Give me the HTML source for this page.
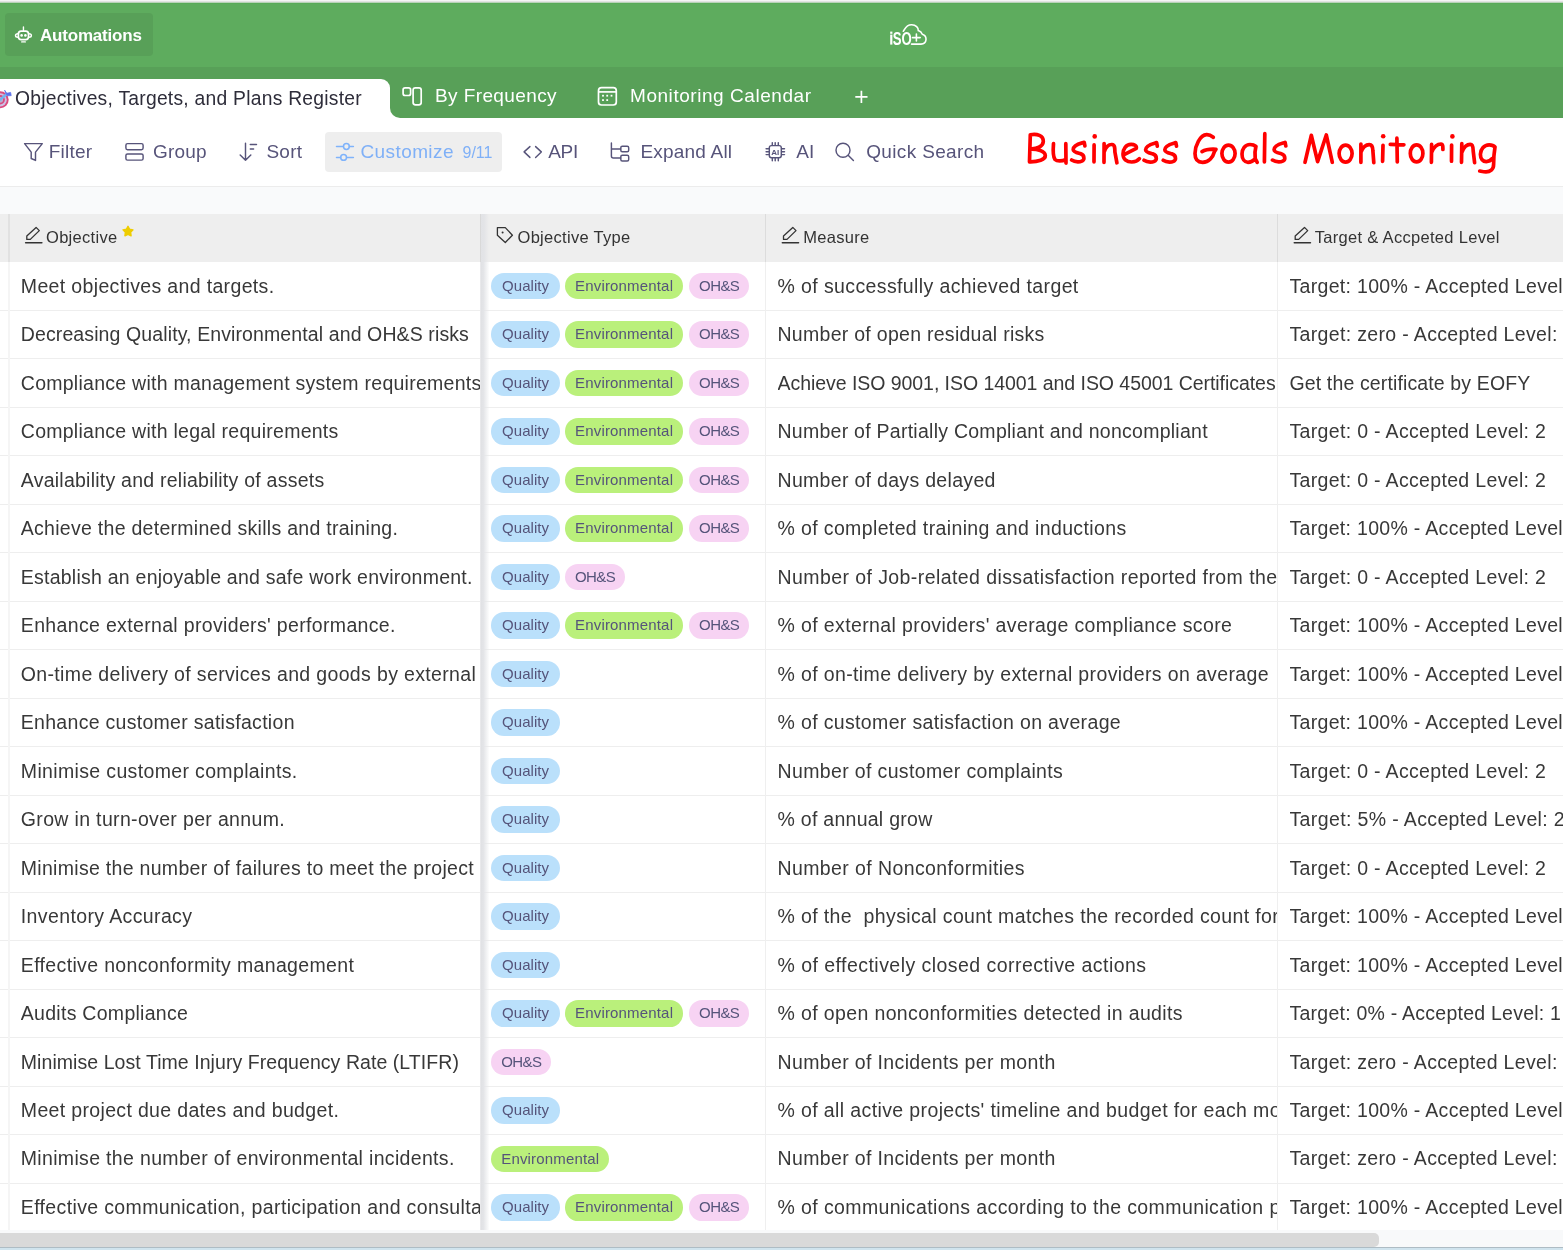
<!DOCTYPE html>
<html><head><meta charset="utf-8"><title>Objectives, Targets, and Plans Register</title>
<style>
*{box-sizing:border-box}
html,body{margin:0;padding:0}
body{width:1563px;height:1250px;overflow:hidden;position:relative;background:#fff;font-family:"Liberation Sans",sans-serif;color:#333}
.a{position:absolute}
#root{position:absolute;left:0;top:0;width:1563px;height:1250px;overflow:hidden;background:#fff;will-change:transform}
.t{position:absolute;white-space:pre;line-height:20px;height:20px}
.cell{position:absolute;overflow:hidden;white-space:pre;height:30px;line-height:30px;font-size:19.5px;letter-spacing:0.25px;color:#383838}
.pill{position:absolute;height:26.4px;line-height:26.4px;border-radius:13.2px;font-size:15px;letter-spacing:0.05px;color:#55547a;text-align:center;white-space:pre}
.q{background:#bae0fb}
.e{background:#baf07b}
.o{background:#f7d3f3}
.tb{color:#57547a;font-size:19px;letter-spacing:0.2px}
.hd{font-size:16.5px;letter-spacing:0.3px;color:#333}
svg{position:absolute;overflow:visible}
</style></head><body><div id="root">

<div class="a" style="left:0;top:0;width:1563px;height:1px;background:#f5f5f5"></div>
<div class="a" style="left:0;top:1px;width:1563px;height:1px;background:#e3e3e3"></div>
<div class="a" style="left:0;top:2px;width:1563px;height:1px;background:#b9d3b9"></div>
<div class="a" style="left:0;top:3px;width:1563px;height:64px;background:#5eac5e"></div>
<div class="a" style="left:0;top:3px;width:1563px;height:1px;background:#59aa59"></div>
<div class="a" style="left:5px;top:13px;width:147.5px;height:43px;background:#58a058;border-radius:4px"></div>
<svg style="left:0;top:0" width="40" height="50" viewBox="0 0 40 50"><g fill="none" stroke="#fff" stroke-width="1.4" stroke-linecap="round" stroke-linejoin="round">
<line x1="23.45" y1="26.9" x2="23.45" y2="30.4"/>
<rect x="18.4" y="31.2" width="10.1" height="8.4" rx="2.8" stroke-width="1.7"/>
<path d="M18 33.7 C16.2 33.7 15.5 34.5 15.5 35.5 C15.5 36.5 16.2 37.3 18 37.3 M28.9 33.7 C30.7 33.7 31.4 34.5 31.4 35.5 C31.4 36.5 30.7 37.3 28.9 37.3"/>
<line x1="21.7" y1="41.9" x2="25.3" y2="41.9"/>
</g><circle cx="21.6" cy="35.4" r="1.3" fill="#fff"/><circle cx="25.4" cy="35.4" r="1.3" fill="#fff"/></svg>
<div class="t" style="left:40px;top:25.71px;font-size:17px;font-weight:bold;color:#fff;letter-spacing:-0.2px">Automations</div>
<svg style="left:0;top:0" width="1563" height="60" viewBox="0 0 1563 60">
<g fill="#fff"><rect x="890.2" y="31.6" width="2.2" height="2.2"/><rect x="890.2" y="34.6" width="2.2" height="10"/></g>
<text x="892.8" y="44.7" font-family="Liberation Sans" font-weight="bold" font-size="17.6" fill="#fff" textLength="19" lengthAdjust="spacingAndGlyphs">SO</text>
<g fill="none" stroke="#fff" stroke-width="1.6" stroke-linecap="round">
<path d="M903.3 31.2 C905 29.5 905.5 25 911.5 24.8 C916 24.7 918.5 28 918.3 30.6 C920.5 31.4 921.7 32.8 922.3 34.2 C925 35 926.2 37.5 926 39.8 C925.7 42.8 923.6 44 921 44.1 L911.5 44.1"/>
<path d="M912.5 37.6 H920.2 M916.4 34 V41"/>
</g></svg>
<div class="a" style="left:0;top:67px;width:390px;height:51px;background:#58a058"></div>
<div class="a" style="left:0;top:79px;width:390px;height:39px;background:#fff;border-top-right-radius:9px"></div>
<div class="a" style="left:390px;top:67px;width:1173px;height:51px;background:#58a058;border-bottom-left-radius:10px"></div>
<svg style="left:0;top:0" width="20" height="120" viewBox="0 0 20 120">
<circle cx="0.2" cy="99.8" r="8.5" fill="#da4a7e"/><circle cx="0.2" cy="99.8" r="6.6" fill="#ccc0e4"/><circle cx="0.2" cy="99.8" r="4.7" fill="#da4a7e"/><circle cx="0.2" cy="99.8" r="2.9" fill="#b9aed0"/>
<path d="M0.3 99.6 L6.8 94" stroke="#72b2f0" stroke-width="2.4" stroke-linecap="round"/>
<path d="M4.6 90.2 L6.8 93.3 L10.6 92.4 L11.2 95.6 L7.6 95.8 L6.4 94.6 Z" fill="#5c72ea" stroke="#5c72ea" stroke-width="0.8" stroke-linejoin="round"/>
</svg>
<div class="t" style="left:15px;top:88.71px;font-size:19.3px;color:#2e2d3a;letter-spacing:0.25px">Objectives, Targets, and Plans Register</div>
<svg style="left:0;top:0" width="900" height="120" viewBox="0 0 900 120"><g fill="none" stroke="#fff" stroke-width="1.7">
<rect x="403.1" y="87.8" width="7.5" height="7.7" rx="2"/>
<rect x="413.1" y="87.8" width="8.1" height="17.1" rx="2.3"/>
<rect x="598.5" y="87.7" width="17.8" height="17.3" rx="3"/>
<line x1="598.5" y1="91.9" x2="616.3" y2="91.9"/>
<path d="M861.4 90.8 V103 M855.3 96.9 H867.5"/>
</g><g fill="#fff">
<rect x="602.1" y="94.8" width="1.8" height="1.8"/><rect x="606.3" y="94.8" width="1.8" height="1.8"/><rect x="610.6" y="94.8" width="1.8" height="1.8"/>
<rect x="602.1" y="99.2" width="1.8" height="1.8"/><rect x="606.3" y="99.2" width="1.8" height="1.8"/>
</g></svg>
<div class="t" style="left:435px;top:85.82px;font-size:19px;color:#fff;letter-spacing:0.4px">By Frequency</div>
<div class="t" style="left:630px;top:86.02px;font-size:19px;color:#fff;letter-spacing:0.55px">Monitoring Calendar</div>
<div class="a" style="left:0;top:186px;width:1563px;height:1px;background:#ececec"></div>
<div class="a" style="left:0;top:187px;width:1563px;height:27px;background:#f9fafb"></div>
<div class="a" style="left:325px;top:132px;width:177px;height:40px;background:#eeeeee;border-radius:4px"></div>
<svg style="left:0;top:0" width="1000" height="180" viewBox="0 0 1000 180"><g fill="none" stroke="#57547a" stroke-width="1.45" stroke-linecap="round" stroke-linejoin="round">
<path d="M24.6 143.6 H42.3 L35.5 152.1 V160.4 L31.2 158.5 V152.1 Z"/>
<rect x="125.9" y="143.6" width="17.2" height="6.1" rx="1.6"/>
<rect x="125.9" y="154" width="17.2" height="6.1" rx="1.6"/>
<path d="M245.5 143.3 V160.2 M240.2 155 L245.5 160.3 L250.8 155 M250.3 144.4 H256.5 M250.3 149 H253.6"/>
<path d="M529.9 146.6 L524.1 151.9 L529.9 157.4 M535.6 146.6 L541.3 151.9 L535.6 157.4"/>
<path d="M611.4 143 V156 Q611.4 157.9 613.3 157.9 H620.6 M611.4 149 H620.6"/>
<rect x="620.8" y="146.2" width="7.9" height="5.6" rx="1.5"/>
<rect x="620.8" y="155.3" width="7.9" height="5.6" rx="1.5"/>
<rect x="769.3" y="145.6" width="12" height="12.2" rx="2.2"/>
<path d="M772.3 142.6 V145 M775.2 142.6 V145 M778.3 142.6 V145 M772.3 158.4 V160.8 M775.2 158.4 V160.8 M778.3 158.4 V160.8 M766.1 148.8 H768.6 M766.1 151.7 H768.6 M766.1 154.6 H768.6 M782 148.8 H784.5 M782 151.7 H784.5 M782 154.6 H784.5"/>
<circle cx="843" cy="150.3" r="7"/>
<path d="M848.4 155.6 L853.4 160.6"/>
</g>
<text x="771.2" y="155.2" font-family="Liberation Sans" font-weight="bold" font-size="8" fill="#57547a">AI</text>
<g fill="none" stroke="#7fb3fb" stroke-width="1.5" stroke-linecap="round">
<path d="M336.5 146.5 H343.4 M349.4 146.5 H353.4 M336.5 157.4 H340.6 M346.6 157.4 H353.4"/>
<circle cx="346.4" cy="146.5" r="2.9"/><circle cx="343.6" cy="157.4" r="2.9"/>
</g></svg>
<div class="t tb" style="left:48.8px;top:141.62px;font-size:19px;">Filter</div>
<div class="t tb" style="left:153px;top:141.62px;font-size:19px;">Group</div>
<div class="t tb" style="left:266.5px;top:141.62px;font-size:19px;">Sort</div>
<div class="t tb" style="left:360.5px;top:141.62px;font-size:19px;color:#7fb0f7;letter-spacing:0.4px">Customize</div>
<div class="t tb" style="left:462.5px;top:142.66px;font-size:16px;color:#7fb0f7;letter-spacing:0px">9/11</div>
<div class="t tb" style="left:548.2px;top:141.62px;font-size:19px;letter-spacing:-0.3px">API</div>
<div class="t tb" style="left:640.5px;top:141.62px;font-size:19px;">Expand All</div>
<div class="t tb" style="left:796.2px;top:141.62px;font-size:19px;">AI</div>
<div class="t tb" style="left:866.2px;top:141.62px;font-size:19px;letter-spacing:0.35px">Quick Search</div>
<svg style="left:0;top:0" width="1563" height="190" viewBox="0 0 1563 190">
<defs><path id="gs" d="M0 0 L-0.7 -3.6 C-4 -2.5 -11.5 -1.5 -11.7 3.6 C-11.8 6 -8 6.8 -4.5 7.7 C-1.5 8.5 -1 10 -1 12.3 C-1 15 -4.5 15.9 -7 15.9 C-9.5 15.9 -12 15 -13.3 14.1"/></defs>
<g fill="none" stroke="#ff0000" stroke-width="3.7" stroke-linecap="round" stroke-linejoin="round">
<path d="M1030.3 134.8 L1029.5 161.8 M1030.3 134.8 C1037 133.5 1043.5 135.5 1043.3 141.5 C1043 147 1036 149 1031 148.8 M1030.5 149.3 C1037 149 1045 151 1045.3 155.5 C1045.5 159.5 1038 162 1029.5 161.8"/>
<path d="M1053.5 143.7 C1053 150 1053 157 1055 159.5 C1057 161.5 1062 161.3 1065.5 159.8 M1065.8 143.7 L1066 163.1"/>
<use href="#gs" x="1084.9" y="145.9"/>
<path d="M1094.1 144.9 L1094 161.8"/>
<path d="M1104.1 143.5 L1104 162.3 M1104.3 151.5 C1106 147 1109 144.3 1112 144.5 C1115 144.7 1114.8 148 1114.9 152 L1116.9 162.8"/>
<path d="M1124.6 154.3 L1136.3 148.3 C1137 145.5 1134 144.3 1131 144.4 C1126 144.5 1123 149 1123 154 C1123 159.5 1127 162 1131.7 162 C1135 162 1138 160.5 1139.4 158.7"/>
<use href="#gs" x="1157.3" y="146.2"/>
<use href="#gs" x="1176.5" y="146.2"/>
<path d="M1213.3 137.3 C1211 135.5 1209 134.6 1206.6 134.7 C1200 135 1195 146 1195 153.5 C1195 159.5 1198 162.3 1202.6 162.3 C1209 162.3 1213 157 1214.5 151.5 L1216 149.3 C1211 149 1205.5 149.5 1202 151.6"/>
<ellipse cx="1228.5" cy="153.6" rx="6.6" ry="8.5"/>
<path d="M1255.9 146.5 C1254 144.8 1252 144.5 1250 144.5 C1245 144.5 1242 149 1242 154 C1242 159 1244.5 162.3 1248 162.3 C1251 162.3 1253 161 1254.3 159.5 M1255.9 146.5 C1254.8 150.5 1254.8 155 1255.2 158.5 L1257.2 162.3"/>
<path d="M1264.8 133.7 L1264.4 161.9"/>
<use href="#gs" x="1285.8" y="146"/>
<path d="M1305 162.3 L1311.3 135.3 L1317.6 161.6 L1326.3 135 L1332.3 162.3"/>
<ellipse cx="1345.6" cy="153.6" rx="6.5" ry="8.5"/>
<path d="M1360.9 144 L1360.9 162.3 M1361 152 C1363 147 1366 144.6 1369.2 144.6 C1372.5 144.6 1372.9 148 1372.9 151 L1373.8 162.6"/>
<path d="M1383 145.3 L1382.6 161.3"/>
<path d="M1396.9 138.2 L1397.3 161.9 M1390.3 144.4 L1403.9 144.8"/>
<ellipse cx="1416.6" cy="153.4" rx="6.3" ry="8.5"/>
<path d="M1431.6 144.4 L1431.4 162.3 M1431.8 152 C1434 147 1437.5 144 1441 144 C1443 144 1442.9 147 1442.9 149.5"/>
<path d="M1451.6 145.1 L1451.5 161.2"/>
<path d="M1461.8 143.7 L1461.5 162.3 M1462 152 C1464 147 1467 144.4 1470.2 144.4 C1473 144.4 1473.2 148 1473.2 151 L1474.6 162.6"/>
<path d="M1495 147 C1493.5 145.3 1491.5 144.8 1489.2 144.8 C1484 144.8 1480.4 149.5 1480.4 154.3 C1480.4 159 1483 161.6 1486.3 161.6 C1489 161.6 1491 160.3 1492.1 158.6 M1495 147 C1494 153 1493.6 158 1493.6 164.5 C1493.6 169.5 1490 171.8 1486 171.8 C1483.5 171.8 1481.5 171.3 1479.7 171"/>
</g><g fill="#ff0000"><circle cx="1094.7" cy="136.4" r="2.3"/><circle cx="1383.2" cy="136.3" r="2.3"/><circle cx="1452.4" cy="136.4" r="2.3"/></g>
</svg>
<div class="a" style="left:0;top:214px;width:1563px;height:48px;background:#eeeeee"></div>
<div class="a" style="left:8px;top:214px;width:2px;height:48px;background:#e1e1e1"></div>
<div class="a" style="left:765px;top:214px;width:1px;height:48px;background:#dcdcdc"></div>
<div class="a" style="left:1277px;top:214px;width:1px;height:48px;background:#dcdcdc"></div>
<svg style="left:0;top:0" width="1563" height="262" viewBox="0 0 1563 262"><g fill="none" stroke="#333" stroke-width="1.3" stroke-linejoin="round" stroke-linecap="round">
<path d="M36.1 227.4 L39.3 230.6 L30.3 239.4 H26.8 V235.9 Z"/><path d="M25.6 242.7 H41.9" stroke-width="1.4"/>
<path d="M792.8 227.4 L796 230.6 L787 239.4 H783.5 V235.9 Z"/><path d="M782.3 242.7 H798.6" stroke-width="1.4"/>
<path d="M1304.5 227.4 L1307.7 230.6 L1298.7 239.4 H1295.2 V235.9 Z"/><path d="M1294.2 242.7 H1310.5" stroke-width="1.4"/>
<path d="M497.4 227.6 H505.3 L512.4 235.2 L505.3 242.5 L497.4 235.2 Z"/>
</g><circle cx="502.6" cy="232.6" r="1" fill="#333"/>
<path d="M128.00 226.25 L129.62 229.28 L132.99 229.88 L130.62 232.35 L131.09 235.75 L128.00 234.25 L124.91 235.75 L125.38 232.35 L123.01 229.88 L126.38 229.28 Z" fill="#eecd00" stroke="#eecd00" stroke-width="1.4" stroke-linejoin="round"/>
</svg>
<div class="t hd" style="left:46px;top:226.78px;font-size:16.5px;">Objective</div>
<div class="t hd" style="left:517.5px;top:226.78px;font-size:16.5px;">Objective Type</div>
<div class="t hd" style="left:803.2px;top:226.78px;font-size:16.5px;">Measure</div>
<div class="t hd" style="left:1314.8px;top:226.78px;font-size:16.5px;">Target &amp; Accpeted Level</div>
<div class="a" style="left:0;top:310px;width:1563px;height:1px;background:#eeeeee"></div>
<div class="cell" style="left:20.8px;top:270.74px;width:459.2px;letter-spacing:0.35px">Meet objectives and targets.</div>
<div class="cell" style="left:777.5px;top:270.74px;width:499px;letter-spacing:0.39px">% of successfully achieved target</div>
<div class="cell" style="left:1289.5px;top:270.74px;width:274px;letter-spacing:0.31px">Target: 100% - Accepted Level: 80%</div>
<div class="pill q" style="left:491.2px;top:272.9px;width:68.8px">Quality</div>
<div class="pill e" style="left:565px;top:272.9px;width:118.2px;letter-spacing:0.17px">Environmental</div>
<div class="pill o" style="left:689.1px;top:272.9px;width:60.1px;letter-spacing:-0.6px">OH&amp;S</div>
<div class="a" style="left:0;top:358px;width:1563px;height:1px;background:#eeeeee"></div>
<div class="cell" style="left:20.8px;top:319.23px;width:459.2px;letter-spacing:0.11px">Decreasing Quality, Environmental and OH&amp;S risks</div>
<div class="cell" style="left:777.5px;top:319.23px;width:499px;letter-spacing:0.28px">Number of open residual risks</div>
<div class="cell" style="left:1289.5px;top:319.23px;width:274px;letter-spacing:0.34px">Target: zero - Accepted Level: 1</div>
<div class="pill q" style="left:491.2px;top:321.38px;width:68.8px">Quality</div>
<div class="pill e" style="left:565px;top:321.38px;width:118.2px;letter-spacing:0.17px">Environmental</div>
<div class="pill o" style="left:689.1px;top:321.38px;width:60.1px;letter-spacing:-0.6px">OH&amp;S</div>
<div class="a" style="left:0;top:407px;width:1563px;height:1px;background:#eeeeee"></div>
<div class="cell" style="left:20.8px;top:367.71px;width:459.2px;letter-spacing:0.26px">Compliance with management system requirements</div>
<div class="cell" style="left:777.5px;top:367.71px;width:499px;letter-spacing:-0.05px">Achieve ISO 9001, ISO 14001 and ISO 45001 Certificates</div>
<div class="cell" style="left:1289.5px;top:367.71px;width:274px;letter-spacing:0.13px">Get the certificate by EOFY</div>
<div class="pill q" style="left:491.2px;top:369.87px;width:68.8px">Quality</div>
<div class="pill e" style="left:565px;top:369.87px;width:118.2px;letter-spacing:0.17px">Environmental</div>
<div class="pill o" style="left:689.1px;top:369.87px;width:60.1px;letter-spacing:-0.6px">OH&amp;S</div>
<div class="a" style="left:0;top:455px;width:1563px;height:1px;background:#eeeeee"></div>
<div class="cell" style="left:20.8px;top:416.2px;width:459.2px;letter-spacing:0.26px">Compliance with legal requirements</div>
<div class="cell" style="left:777.5px;top:416.2px;width:499px;letter-spacing:0.26px">Number of Partially Compliant and noncompliant</div>
<div class="cell" style="left:1289.5px;top:416.2px;width:274px;letter-spacing:0.33px">Target: 0 - Accepted Level: 2</div>
<div class="pill q" style="left:491.2px;top:418.35px;width:68.8px">Quality</div>
<div class="pill e" style="left:565px;top:418.35px;width:118.2px;letter-spacing:0.17px">Environmental</div>
<div class="pill o" style="left:689.1px;top:418.35px;width:60.1px;letter-spacing:-0.6px">OH&amp;S</div>
<div class="a" style="left:0;top:504px;width:1563px;height:1px;background:#eeeeee"></div>
<div class="cell" style="left:20.8px;top:464.68px;width:459.2px;letter-spacing:0.24px">Availability and reliability of assets</div>
<div class="cell" style="left:777.5px;top:464.68px;width:499px;letter-spacing:0.31px">Number of days delayed</div>
<div class="cell" style="left:1289.5px;top:464.68px;width:274px;letter-spacing:0.33px">Target: 0 - Accepted Level: 2</div>
<div class="pill q" style="left:491.2px;top:466.84px;width:68.8px">Quality</div>
<div class="pill e" style="left:565px;top:466.84px;width:118.2px;letter-spacing:0.17px">Environmental</div>
<div class="pill o" style="left:689.1px;top:466.84px;width:60.1px;letter-spacing:-0.6px">OH&amp;S</div>
<div class="a" style="left:0;top:552px;width:1563px;height:1px;background:#eeeeee"></div>
<div class="cell" style="left:20.8px;top:513.17px;width:459.2px;letter-spacing:0.28px">Achieve the determined skills and training.</div>
<div class="cell" style="left:777.5px;top:513.17px;width:499px;letter-spacing:0.37px">% of completed training and inductions</div>
<div class="cell" style="left:1289.5px;top:513.17px;width:274px;letter-spacing:0.31px">Target: 100% - Accepted Level: 80%</div>
<div class="pill q" style="left:491.2px;top:515.33px;width:68.8px">Quality</div>
<div class="pill e" style="left:565px;top:515.33px;width:118.2px;letter-spacing:0.17px">Environmental</div>
<div class="pill o" style="left:689.1px;top:515.33px;width:60.1px;letter-spacing:-0.6px">OH&amp;S</div>
<div class="a" style="left:0;top:601px;width:1563px;height:1px;background:#eeeeee"></div>
<div class="cell" style="left:20.8px;top:561.65px;width:459.2px;letter-spacing:0.24px">Establish an enjoyable and safe work environment.</div>
<div class="cell" style="left:777.5px;top:561.65px;width:499px;letter-spacing:0.42px">Number of Job-related dissatisfaction reported from the staff</div>
<div class="cell" style="left:1289.5px;top:561.65px;width:274px;letter-spacing:0.33px">Target: 0 - Accepted Level: 2</div>
<div class="pill q" style="left:491.2px;top:563.81px;width:68.8px">Quality</div>
<div class="pill o" style="left:565px;top:563.81px;width:60.1px;letter-spacing:-0.6px">OH&amp;S</div>
<div class="a" style="left:0;top:649px;width:1563px;height:1px;background:#eeeeee"></div>
<div class="cell" style="left:20.8px;top:610.14px;width:459.2px;letter-spacing:0.34px">Enhance external providers' performance.</div>
<div class="cell" style="left:777.5px;top:610.14px;width:499px;letter-spacing:0.38px">% of external providers' average compliance score</div>
<div class="cell" style="left:1289.5px;top:610.14px;width:274px;letter-spacing:0.31px">Target: 100% - Accepted Level: 80%</div>
<div class="pill q" style="left:491.2px;top:612.29px;width:68.8px">Quality</div>
<div class="pill e" style="left:565px;top:612.29px;width:118.2px;letter-spacing:0.17px">Environmental</div>
<div class="pill o" style="left:689.1px;top:612.29px;width:60.1px;letter-spacing:-0.6px">OH&amp;S</div>
<div class="a" style="left:0;top:698px;width:1563px;height:1px;background:#eeeeee"></div>
<div class="cell" style="left:20.8px;top:658.62px;width:459.2px;letter-spacing:0.35px">On-time delivery of services and goods by external providers</div>
<div class="cell" style="left:777.5px;top:658.62px;width:499px;letter-spacing:0.37px">% of on-time delivery by external providers on average</div>
<div class="cell" style="left:1289.5px;top:658.62px;width:274px;letter-spacing:0.31px">Target: 100% - Accepted Level: 80%</div>
<div class="pill q" style="left:491.2px;top:660.78px;width:68.8px">Quality</div>
<div class="a" style="left:0;top:746px;width:1563px;height:1px;background:#eeeeee"></div>
<div class="cell" style="left:20.8px;top:707.11px;width:459.2px;letter-spacing:0.29px">Enhance customer satisfaction</div>
<div class="cell" style="left:777.5px;top:707.11px;width:499px;letter-spacing:0.35px">% of customer satisfaction on average</div>
<div class="cell" style="left:1289.5px;top:707.11px;width:274px;letter-spacing:0.31px">Target: 100% - Accepted Level: 80%</div>
<div class="pill q" style="left:491.2px;top:709.26px;width:68.8px">Quality</div>
<div class="a" style="left:0;top:795px;width:1563px;height:1px;background:#eeeeee"></div>
<div class="cell" style="left:20.8px;top:755.59px;width:459.2px;letter-spacing:0.35px">Minimise customer complaints.</div>
<div class="cell" style="left:777.5px;top:755.59px;width:499px;letter-spacing:0.36px">Number of customer complaints</div>
<div class="cell" style="left:1289.5px;top:755.59px;width:274px;letter-spacing:0.33px">Target: 0 - Accepted Level: 2</div>
<div class="pill q" style="left:491.2px;top:757.75px;width:68.8px">Quality</div>
<div class="a" style="left:0;top:843px;width:1563px;height:1px;background:#eeeeee"></div>
<div class="cell" style="left:20.8px;top:804.08px;width:459.2px;letter-spacing:0.34px">Grow in turn-over per annum.</div>
<div class="cell" style="left:777.5px;top:804.08px;width:499px;letter-spacing:0.27px">% of annual grow</div>
<div class="cell" style="left:1289.5px;top:804.08px;width:274px;letter-spacing:0.37px">Target: 5% - Accepted Level: 2%</div>
<div class="pill q" style="left:491.2px;top:806.24px;width:68.8px">Quality</div>
<div class="a" style="left:0;top:892px;width:1563px;height:1px;background:#eeeeee"></div>
<div class="cell" style="left:20.8px;top:852.56px;width:459.2px;letter-spacing:0.3px">Minimise the number of failures to meet the project requirements</div>
<div class="cell" style="left:777.5px;top:852.56px;width:499px;letter-spacing:0.4px">Number of Nonconformities</div>
<div class="cell" style="left:1289.5px;top:852.56px;width:274px;letter-spacing:0.33px">Target: 0 - Accepted Level: 2</div>
<div class="pill q" style="left:491.2px;top:854.72px;width:68.8px">Quality</div>
<div class="a" style="left:0;top:940px;width:1563px;height:1px;background:#eeeeee"></div>
<div class="cell" style="left:20.8px;top:901.05px;width:459.2px;letter-spacing:0.38px">Inventory Accuracy</div>
<div class="cell" style="left:777.5px;top:901.05px;width:499px;letter-spacing:0.37px">% of the  physical count matches the recorded count for</div>
<div class="cell" style="left:1289.5px;top:901.05px;width:274px;letter-spacing:0.31px">Target: 100% - Accepted Level: 95%</div>
<div class="pill q" style="left:491.2px;top:903.2px;width:68.8px">Quality</div>
<div class="a" style="left:0;top:989px;width:1563px;height:1px;background:#eeeeee"></div>
<div class="cell" style="left:20.8px;top:949.53px;width:459.2px;letter-spacing:0.35px">Effective nonconformity management</div>
<div class="cell" style="left:777.5px;top:949.53px;width:499px;letter-spacing:0.46px">% of effectively closed corrective actions</div>
<div class="cell" style="left:1289.5px;top:949.53px;width:274px;letter-spacing:0.31px">Target: 100% - Accepted Level: 90%</div>
<div class="pill q" style="left:491.2px;top:951.69px;width:68.8px">Quality</div>
<div class="a" style="left:0;top:1037px;width:1563px;height:1px;background:#eeeeee"></div>
<div class="cell" style="left:20.8px;top:998.02px;width:459.2px;letter-spacing:0.28px">Audits Compliance</div>
<div class="cell" style="left:777.5px;top:998.02px;width:499px;letter-spacing:0.37px">% of open nonconformities detected in audits</div>
<div class="cell" style="left:1289.5px;top:998.02px;width:274px;letter-spacing:0.24px">Target: 0% - Accepted Level: 1</div>
<div class="pill q" style="left:491.2px;top:1000.17px;width:68.8px">Quality</div>
<div class="pill e" style="left:565px;top:1000.17px;width:118.2px;letter-spacing:0.17px">Environmental</div>
<div class="pill o" style="left:689.1px;top:1000.17px;width:60.1px;letter-spacing:-0.6px">OH&amp;S</div>
<div class="a" style="left:0;top:1086px;width:1563px;height:1px;background:#eeeeee"></div>
<div class="cell" style="left:20.8px;top:1046.5px;width:459.2px;letter-spacing:0.06px">Minimise Lost Time Injury Frequency Rate (LTIFR)</div>
<div class="cell" style="left:777.5px;top:1046.5px;width:499px;letter-spacing:0.36px">Number of Incidents per month</div>
<div class="cell" style="left:1289.5px;top:1046.5px;width:274px;letter-spacing:0.34px">Target: zero - Accepted Level: 1</div>
<div class="pill o" style="left:491.2px;top:1048.66px;width:60.1px;letter-spacing:-0.6px">OH&amp;S</div>
<div class="a" style="left:0;top:1134px;width:1563px;height:1px;background:#eeeeee"></div>
<div class="cell" style="left:20.8px;top:1094.99px;width:459.2px;letter-spacing:0.34px">Meet project due dates and budget.</div>
<div class="cell" style="left:777.5px;top:1094.99px;width:499px;letter-spacing:0.38px">% of all active projects' timeline and budget for each month</div>
<div class="cell" style="left:1289.5px;top:1094.99px;width:274px;letter-spacing:0.31px">Target: 100% - Accepted Level: 90%</div>
<div class="pill q" style="left:491.2px;top:1097.14px;width:68.8px">Quality</div>
<div class="a" style="left:0;top:1183px;width:1563px;height:1px;background:#eeeeee"></div>
<div class="cell" style="left:20.8px;top:1143.47px;width:459.2px;letter-spacing:0.33px">Minimise the number of environmental incidents.</div>
<div class="cell" style="left:777.5px;top:1143.47px;width:499px;letter-spacing:0.36px">Number of Incidents per month</div>
<div class="cell" style="left:1289.5px;top:1143.47px;width:274px;letter-spacing:0.34px">Target: zero - Accepted Level: 1</div>
<div class="pill e" style="left:491.2px;top:1145.63px;width:118.2px;letter-spacing:0.17px">Environmental</div>
<div class="cell" style="left:20.8px;top:1191.96px;width:459.2px;letter-spacing:0.36px">Effective communication, participation and consultation</div>
<div class="cell" style="left:777.5px;top:1191.96px;width:499px;letter-spacing:0.4px">% of communications according to the communication plan</div>
<div class="cell" style="left:1289.5px;top:1191.96px;width:274px;letter-spacing:0.31px">Target: 100% - Accepted Level: 90%</div>
<div class="pill q" style="left:491.2px;top:1194.12px;width:68.8px">Quality</div>
<div class="pill e" style="left:565px;top:1194.12px;width:118.2px;letter-spacing:0.17px">Environmental</div>
<div class="pill o" style="left:689.1px;top:1194.12px;width:60.1px;letter-spacing:-0.6px">OH&amp;S</div>
<div class="a" style="left:8px;top:262px;width:2px;height:968px;background:#f5f5f5"></div>
<div class="a" style="left:765px;top:262px;width:1px;height:968px;background:#efefef"></div>
<div class="a" style="left:1277px;top:262px;width:1px;height:968px;background:#efefef"></div>
<div class="a" style="left:480px;top:214px;width:1px;height:48px;background:#d9d9d9"></div>
<div class="a" style="left:481px;top:214px;width:8px;height:48px;background:linear-gradient(to right,#e2e3e6 0px,#e3e4e7 3px,rgba(238,238,238,0) 8px)"></div>
<div class="a" style="left:480px;top:262px;width:10px;height:968px;background:linear-gradient(to right,#ececee 0px,#e1e2e5 1.5px,#e4e5e8 3.5px,rgba(255,255,255,0) 9.5px)"></div>
<div class="a" style="left:0;top:1230px;width:1563px;height:17px;background:#f8f9fa"></div>
<div class="a" style="left:0;top:1232.5px;width:1378.5px;height:14.5px;background:#d9d9d9;border-radius:0 5px 5px 0"></div>
<div class="a" style="left:0;top:1247px;width:1563px;height:1px;background:#aebcc4"></div>
<div class="a" style="left:0;top:1248px;width:1563px;height:2px;background:#d0e4ee"></div>
</div></body></html>
